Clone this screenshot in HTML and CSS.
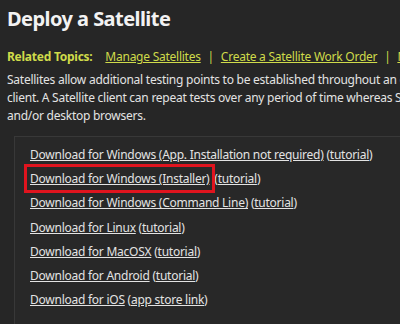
FILE: index.html
```html
<!DOCTYPE html>
<html>
<head>
<meta charset="utf-8">
<link rel="stylesheet" href="styles.css">
</head>
<body>
<div class="page">
  <h1 class="title">Deploy a Satellite</h1>
  <div class="topics">
    <span class="topics-label">Related Topics:</span>
    <a class="topic-link" href="#">Manage Satellites</a>
    <span class="sep">|</span>
    <a class="topic-link" href="#">Create a Satellite Work Order</a>
    <span class="sep">|</span>
    <a class="topic-link" href="#">Monitor Satellites</a>
  </div>
  <p class="intro">Satellites allow additional testing points to be established throughout an organization's network using a Satellite<br>client. A Satellite client can repeat tests over any period of time whereas Speed tests only run in mobile<br>and/or desktop browsers.</p>
  <div class="downloads">
    <div class="dl-row"><a href="#" class="dl">Download for Windows (App. Installation not required)</a> (<a href="#" class="dl">tutorial</a>)</div>
    <div class="dl-row"><span class="highlight"><a href="#" class="dl">Download for Windows (Installer)</a></span> (<a href="#" class="dl">tutorial</a>)</div>
    <div class="dl-row"><a href="#" class="dl">Download for Windows (Command Line)</a> (<a href="#" class="dl">tutorial</a>)</div>
    <div class="dl-row"><a href="#" class="dl">Download for Linux</a> (<a href="#" class="dl">tutorial</a>)</div>
    <div class="dl-row"><a href="#" class="dl">Download for MacOSX</a> (<a href="#" class="dl">tutorial</a>)</div>
    <div class="dl-row"><a href="#" class="dl">Download for Android</a> (<a href="#" class="dl">tutorial</a>)</div>
    <div class="dl-row"><a href="#" class="dl">Download for iOS</a> (<a href="#" class="dl">app store link</a>)</div>
  </div>
</div>
</body>
</html>
```
FILE: styles.css
```css
html, body {
  margin: 0;
  padding: 0;
  background: #262626;
  overflow: hidden;
}
body {
  width: 400px;
  height: 324px;
  font-family: "Noto Sans", "Open Sans", sans-serif;
  color: #e3e3e3;
  font-size: 12px;
  letter-spacing: -0.25px;
}
.page {
  padding: 5px 0 0 7px;
  width: 640px;
}
.title {
  margin: 0;
  font-size: 20px;
  font-weight: bold;
  letter-spacing: -0.55px;
  line-height: 28px;
  color: #f2f2f2;
}
.topics {
  margin-top: 15px;
  line-height: 18px;
  white-space: nowrap;
  color: #cfdb4a;
}
.topics-label {
  font-weight: bold;
  margin-right: 10px;
}
.topic-link {
  color: #cfdb4a;
  text-decoration: underline;
}
.sep {
  margin: 0 4px;
}
.intro {
  margin: 5px 0 0;
  line-height: 18px;
  white-space: nowrap;
}
.downloads {
  margin: 11px 0 0 7px;
  border: 1px solid #383838;
  background: #282828;
  padding: 6px 0 10px 15px;
  height: 174px;
}
.dl-row {
  line-height: 24.2px;
  white-space: nowrap;
}
.dl {
  color: #e3e3e3;
  text-decoration: underline;
}
.highlight {
  outline: 3px solid #e0141e;
  outline-offset: 3px;
  margin-right: 2px;
}
```
